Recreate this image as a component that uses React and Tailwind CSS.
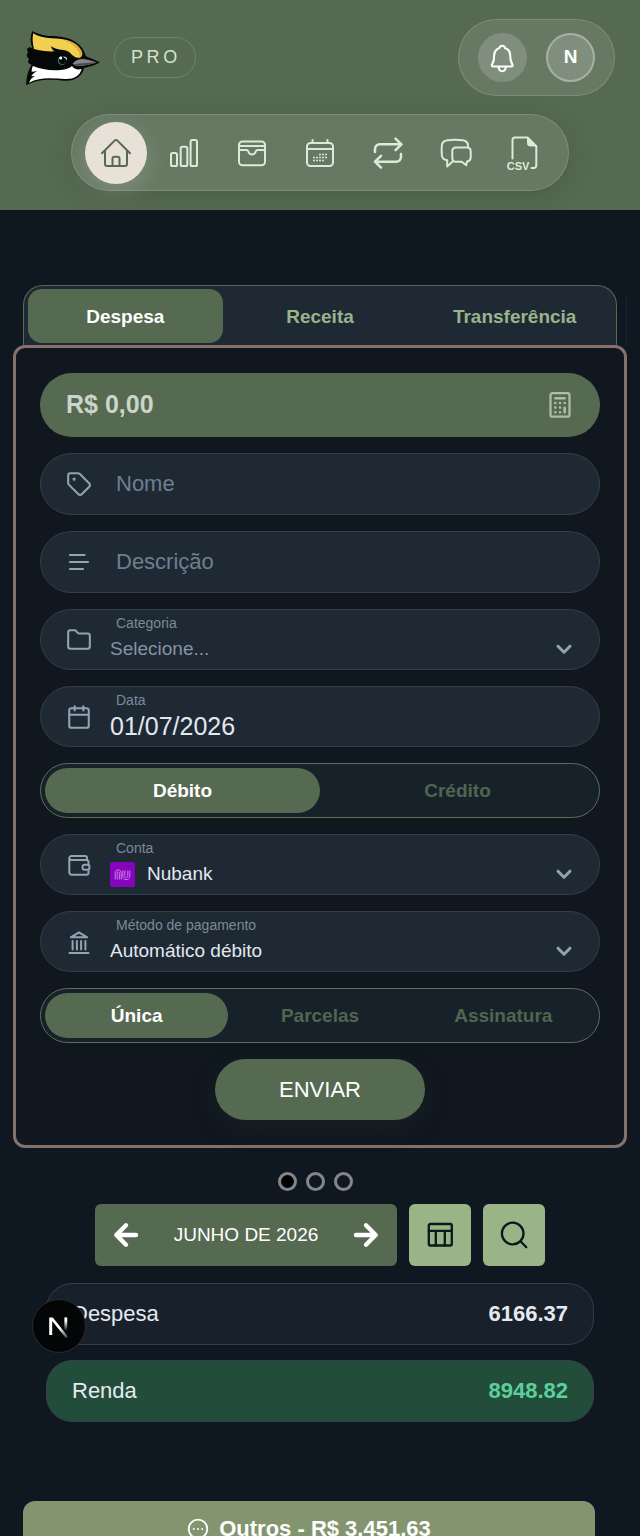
import { useState } from "react";
import { Calendar, Folder, Tag } from "lucide-react";

function BirdLogo() {
  return (
    <svg viewBox="75 88 228 168" className="h-14 w-[76px]" role="img" aria-label="Logo">
      <path
        fill="#060807"
        d="M97 91C110 98 130 106 155 106c42 0 82 14 96 44l7 17 42 18c-10 7-30 13-48 17-6 26-27 40-62 38-32-3-72-7-111 14-1-28 8-49 16-62-11-3-14-10-7-17-9-5-10-14-3-20-6-6-5-14 5-15l7 2c-7-17-7-35 0-51z"
      />
      <path
        fill="#f3cf4f"
        d="M100 98c12 9 34 14 55 15 40 0 76 10 90 38 4 9 2 17-5 20-12 3-22-6-30-15-8-7-18-9-27-9-12-1-21-4-30-10 2 8 6 12 11 15-18 1-44-1-62-7-4-18-6-32-2-47z"
      />
      <path
        fill="#dba93a"
        d="M190 118c28 4 46 14 54 33 3 9 2 16-4 20 0-26-20-42-50-53z"
      />
      <path
        fill="#ffffff"
        d="M99 196c22 9 52 15 82 12 18-1 28-6 35-12 5 9 17 12 29 9-6 21-23 31-49 30-36-1-72-9-109 11 4-10 10-16 18-20l-11 1c4-8 11-13 19-15l-18 1c0-7 1-12 4-17z"
      />
      <path
        fill="#84838a"
        stroke="#060807"
        strokeWidth="3"
        d="M217 189c7-12 22-17 38-15 15 3 29 7 39 11-14 6-38 12-54 13-11 0-19-3-23-9z"
      />
      <path fill="#4c4b52" d="M222 191c22-3 46-5 68-6-16 6-36 10-50 11-8 0-14-2-18-5z" />
      <circle cx="186" cy="180" r="13" fill="#1d7068" />
      <circle cx="188" cy="179" r="11" fill="#050606" />
      <circle cx="182" cy="172" r="4.5" fill="#fff" />
      <path d="M191 169c5 0 8 3 9 8" fill="none" stroke="#dfe5e2" strokeWidth="3.5" />
    </svg>
  );
}

const line = {
  fill: "none",
  stroke: "currentColor",
  strokeLinecap: "round",
  strokeLinejoin: "round",
  "aria-hidden": true,
};

const HomeIcon = () => (
  <svg {...line} viewBox="0 0 32 32" strokeWidth="2" className="size-8">
    <path d="M2 16.2 14.6 3.6q1.4-1.2 2.8 0L30 16.2M5 13.5V27a2 2 0 0 0 2 2h18a2 2 0 0 0 2-2V13.5M12.5 29v-7.3a2 2 0 0 1 2-2h3a2 2 0 0 1 2 2V29" />
  </svg>
);
const BarsIcon = () => (
  <svg {...line} viewBox="0 0 32 32" strokeWidth="2" className="size-8">
    <rect x="3" y="16" width="6" height="13" rx="1.6" />
    <rect x="12.7" y="9.8" width="6.6" height="19.2" rx="1.6" />
    <rect x="22.6" y="3" width="6.4" height="26" rx="1.6" />
  </svg>
);
const ArchiveIcon = () => (
  <svg {...line} viewBox="0 0 32 32" strokeWidth="2" className="size-8">
    <rect x="3" y="4.5" width="26" height="23.7" rx="3.5" />
    <path d="M3.5 9h25M3 13h7.3c1.2 0 1.7.6 2.1 1.8.6 1.7 1.8 2.7 3.6 2.7s3-1 3.6-2.7c.4-1.2.9-1.8 2.1-1.8H29" />
  </svg>
);
const AgendaIcon = () => (
  <svg {...line} viewBox="0 0 32 32" strokeWidth="2" className="size-8">
    <rect x="3" y="6" width="26" height="23" rx="3.5" />
    <path d="M3 12h26M8.5 3v3M23.5 3v3" />
    <path
      strokeWidth="2"
      d="M16 17.4h0M19 17.4h0M22 17.4h0M10 20.5h0M13 20.5h0M16 20.5h0M19 20.5h0M22 20.5h0M10 23.6h0M13 23.6h0M16 23.6h0M19 23.6h0"
    />
  </svg>
);
const RepeatIcon = () => (
  <svg {...line} viewBox="0 0 32 32" strokeWidth="2.5" className="size-8">
    <path d="M3 15v-3a4.7 4.7 0 0 1 4.700-4.700H29M23.500 1.600l6 5.700-6 5.800M29 17v3a4.700 4.700 0 0 1-4.700 4.700H3M9 18.800l-6 5.900 6 5.900" />
  </svg>
);
const ChatIcon = () => (
  <svg {...line} viewBox="0 0 32 32" strokeWidth="2" className="size-8">
    <path d="M28 10V8.500c0-3.300-2-4.700-5.500-5.200-4.500-.6-10.500-.6-15 0C4 3.800 2 5.200 1.800 8.500c-.2 3.500-.2 6.500 0 9.500.2 3 1.900 4.800 5.400 5.200v6.300l6-5.600" />
    <path d="M16 10.500h11c2.500 0 3.700 1.200 3.700 3.700v6.100c0 2.500-1.300 4-3.800 4.300l-.6 3.700-4.600-3.600H16c-2.500 0-3.700-1.300-3.700-3.800v-6.700c0-2.500 1.200-3.700 3.700-3.700z" />
  </svg>
);
const CsvIcon = () => (
  <svg {...line} viewBox="2 0 32 32" strokeWidth="2" className="size-8 overflow-visible">
    <path d="M6.500 21.500V3a2.500 2.500 0 0 1 2.500-2.500h12.500L30.300 9.300v19.200a2.500 2.500 0 0 1-2.500 2.500H25.500" />
    <path fill="currentColor" strokeWidth="1" d="M21.500.8v5.700a2.500 2.500 0 0 0 2.500 2.500h6z" />
    <text
      x="12"
      y="32.700"
      textAnchor="middle"
      fill="currentColor"
      stroke="none"
      className="font-['Liberation_Sans',sans-serif] text-[11px] font-bold"
    >
      CSV
    </text>
  </svg>
);
const BellIcon = () => (
  <svg {...line} viewBox="1 0 32 32" strokeWidth="2.100" className="size-8">
    <path d="M16.200 3.800c-1.500 0-2.400.8-2.800 2.100C9.800 7.300 8.200 10 8.200 13.500c0 3.500-.6 6.300-2 8.600-.9 1.400-.2 2.400 1.100 2.400h17.800c1.300 0 2-1 1.100-2.400-1.400-2.300-2-5.100-2-8.600 0-3.500-1.600-6.200-5.200-7.600-.4-1.300-1.300-2.100-2.800-2.100zM12.600 25c.2 2.600 1.600 4.200 3.600 4.200s3.400-1.600 3.600-4.200" />
  </svg>
);
const LinesIcon = () => (
  <svg {...line} viewBox="0 0 26 26" strokeWidth="2.200" className="size-[26px]">
    <path d="M4 6h14.500M4 13h18M4 20h13" />
  </svg>
);
const WalletIcon = () => (
  <svg {...line} viewBox="0 0 26 26" strokeWidth="2" className="size-[26px]">
    <path d="M21 8V6a2 2 0 0 0-2-2H5.300a2 2 0 0 0-2 2 2 2 0 0 0 2 2H20.500a2 2 0 0 1 2 2v2.500M3.300 6v14.500a2.200 2.200 0 0 0 2.200 2.200H20.500a2 2 0 0 0 2-2V18" />
    <rect x="16.500" y="12.700" width="7" height="5" rx="2.300" />
  </svg>
);
const BankIcon = () => (
  <svg {...line} viewBox="0 0 26 26" strokeWidth="2" className="size-[26px]">
    <path d="M13 3.300 4.800 8.300h16.400zM6.600 12v8.500M10.900 12v8.500M15.100 12v8.500M19.400 12v8.500M3.500 24h19" />
  </svg>
);
const CalculatorIcon = () => (
  <svg {...line} viewBox="0 0 28 28" strokeWidth="2.200" className="size-7">
    <rect x="4.500" y="2.200" width="19" height="23.500" rx="2" />
    <path d="M9.500 7.300h9" strokeWidth="2.600" />
    <path
      strokeWidth="2.600"
      d="M9.300 12h0M14 12h0M18.700 12h0M9.300 16.600h0M14 16.600h0M9.300 21.300h0M14 21.300h0M18.700 16.800v4.400"
    />
  </svg>
);
const ChevronIcon = () => (
  <svg {...line} viewBox="0 0 20 20" strokeWidth="3" className="pointer-events-none size-5 text-[#94a3b3]">
    <path d="m4 7.200 6 6 6-6" />
  </svg>
);
const ArrowIcon = ({ d }) => (
  <svg {...line} viewBox="0 0 28 28" strokeWidth="4.400" className="size-7">
    <path d={d} />
  </svg>
);
const TableIcon = () => (
  <svg {...line} viewBox="0 0 28 28" strokeWidth="2.300" className="size-7">
    <rect x="2.800" y="3" width="23" height="21.500" rx="1.500" />
    <path d="M2.800 9.800h23M9.800 9.800v14.700M18.800 9.800v14.700" />
  </svg>
);
const SearchIcon = () => (
  <svg {...line} viewBox="0 0 28 28" strokeWidth="2.300" className="size-7">
    <circle cx="12.700" cy="12.500" r="10.800" />
    <path d="m20.500 20.300 5.800 5.900" />
  </svg>
);
const MoreIcon = () => (
  <svg {...line} viewBox="0 0 22 22" strokeWidth="1.800" className="size-[22px]">
    <circle cx="11" cy="11" r="9.300" />
    <path strokeWidth="1.900" d="M6.800 11h0M11 11h0M15.200 11h0" />
  </svg>
);
const NubankLogo = () => (
  <svg viewBox="0 0 25 25" className="size-[25px] shrink-0 rounded-[2px] bg-[#8505bd]" aria-hidden="true">
    <g fill="none" stroke="#d58af0" strokeWidth="0.900">
      <path d="M5.200 17.500v-6c0-2.400 1.200-3.600 3-3.600 2 0 3 1.200 3 3.600v6" />
      <path d="M7.200 17.500v-5.700c0-1.300.4-2 1.100-2s1.100.7 1.100 2v5.700" />
      <path d="M12.800 8.500v5.600c0 2.300 1 3.500 3.200 3.500s3.800-1.200 3.800-3.500V8.500" />
      <path d="M14.800 8.500v5.200c0 1.300.4 2 1.300 2s1.700-.7 1.700-2V8.500" />
    </g>
  </svg>
);

const navItems = [
  { label: "Início", Icon: HomeIcon },
  { label: "Gráficos", Icon: BarsIcon },
  { label: "Arquivo", Icon: ArchiveIcon },
  { label: "Agenda", Icon: AgendaIcon },
  { label: "Recorrências", Icon: RepeatIcon },
  { label: "Mensagens", Icon: ChatIcon },
  { label: "Exportar CSV", Icon: CsvIcon },
];

function Header() {
  return (
    <header className="flex flex-col gap-[18px] overflow-hidden bg-[#566a52] py-[19px]">
      <div className="flex items-center px-[25px]">
        <BirdLogo />
        <span className="ml-[13px] flex h-[41px] items-center rounded-full border border-white/15 pr-3.5 pl-4 text-[18px] tracking-[0.2em] text-[#d3e3d0]">
          PRO
        </span>
        <div className="ml-auto flex h-[77px] items-center gap-[19px] rounded-full border border-white/15 bg-white/10 px-[19px]">
          <button
            type="button"
            aria-label="Notificações"
            className="flex size-[49px] items-center justify-center rounded-full bg-white/17 text-white"
          >
            <BellIcon />
          </button>
          <button
            type="button"
            aria-label="Perfil"
            className="flex size-[49px] items-center justify-center rounded-full border-2 border-white/30 bg-white/17 text-[19px] font-bold text-white"
          >
            N
          </button>
        </div>
      </div>
      <nav
        aria-label="Principal"
        className="mx-auto flex h-[77px] items-center gap-1.5 rounded-full border border-white/15 bg-white/10 px-[13px] shadow-[0_6px_28px_rgba(0,0,0,0.12)]"
      >
        {navItems.map(({ label, Icon }, i) => (
          <button
            key={label}
            type="button"
            aria-label={label}
            className={
              i === 0
                ? "flex size-[62px] items-center justify-center rounded-full bg-[#e8e1d7] text-[#566a52] shadow-[0_8px_24px_rgba(232,225,215,0.2)]"
                : "flex size-[62px] items-center justify-center rounded-full text-[#dcebd8]"
            }
          >
            <Icon />
          </button>
        ))}
      </nav>
    </header>
  );
}

function Tabs() {
  const [active, setActive] = useState("Despesa");
  return (
    <div className="relative mx-[23px] grid grid-cols-3 rounded-t-[20px] border border-b-0 border-[#566a52] bg-[#1e2934] px-1 pt-[3px] pb-0.5">
      {["Despesa", "Receita", "Transferência"].map((name) => (
        <button
          key={name}
          type="button"
          onClick={() => setActive(name)}
          className={
            active === name
              ? "h-[54px] rounded-[14px] bg-[#566a52] pt-0.5 text-[19px] font-bold text-white"
              : "h-[54px] rounded-[14px] pt-0.5 text-[19px] font-bold text-[#9ab38b]"
          }
        >
          {name}
        </button>
      ))}
      <span className="absolute top-2.5 -right-[11px] bottom-0 w-px bg-[#1a2431]" />
    </div>
  );
}

function Segmented({ label, options }) {
  const [active, setActive] = useState(options[0]);
  return (
    <div
      role="group"
      aria-label={label}
      className="flex h-[55px] rounded-full border border-[#5a7057] bg-[#17212a] p-1"
    >
      {options.map((name) => (
        <button
          key={name}
          type="button"
          aria-pressed={active === name}
          onClick={() => setActive(name)}
          className={
            active === name
              ? "flex-1 basis-0 rounded-full bg-[#566a52] pt-px text-[19px] font-bold text-white"
              : "flex-1 basis-0 rounded-full pt-px text-[19px] font-bold text-[#51664e]"
          }
        >
          {name}
        </button>
      ))}
    </div>
  );
}

function TextField({ id, label, icon }) {
  return (
    <div className="flex h-[62px] items-center gap-[18px] rounded-full border border-[#313e4c] bg-[#1e2934] px-[25px] text-[#94a3b3]">
      {icon}
      <input
        id={id}
        type="text"
        aria-label={label}
        placeholder={label}
        className="min-w-0 flex-1 bg-transparent pb-0.5 pl-1.5 text-[22px] text-[#e2e8f0] outline-none placeholder:text-[#6f7f90]"
      />
    </div>
  );
}

function LabelledField({ id, label, icon, children }) {
  return (
    <div className="flex h-[61px] items-center gap-[18px] rounded-full border border-[#313e4c] bg-[#1e2934] px-[25px] text-[#94a3b3]">
      {icon}
      <div className="flex min-w-0 flex-1 flex-col gap-1 self-start pt-1">
        <label htmlFor={id} className="pl-1.5 text-[14px] leading-[18px] text-[#7b8a9a]">
          {label}
        </label>
        <div className="flex h-[26px] items-center">{children}</div>
      </div>
    </div>
  );
}

function Select({ id, value, muted }) {
  return (
    <>
      <select
        id={id}
        className={
          muted
            ? "h-[26px] min-w-0 flex-1 appearance-none bg-transparent text-[19px] leading-[26px] text-[#8593a3] outline-none"
            : "h-[26px] min-w-0 flex-1 appearance-none bg-transparent text-[19px] leading-[26px] text-[#e2e8f0] outline-none"
        }
      >
        <option>{value}</option>
      </select>
      <ChevronIcon />
    </>
  );
}

function ExpenseForm() {
  return (
    <form
      onSubmit={(e) => e.preventDefault()}
      className="relative mx-[13px] flex flex-col gap-4 rounded-[12px] border-3 border-[#85706a] bg-[#10171f] px-6 py-[25px]"
    >
      <div className="flex h-16 items-center rounded-full bg-[#566a52] px-[26px]">
        <input
          type="text"
          aria-label="Valor"
          placeholder="R$ 0,00"
          className="min-w-0 flex-1 bg-transparent text-[25px] font-bold text-white outline-none placeholder:text-[#ccd5c9]"
        />
        <button type="button" aria-label="Calculadora" className="text-[#b0bdac]">
          <CalculatorIcon />
        </button>
      </div>
      <TextField id="nome" label="Nome" icon={<Tag size={26} strokeWidth={1.9} />} />
      <TextField id="descricao" label="Descrição" icon={<LinesIcon />} />
      <LabelledField id="categoria" label="Categoria" icon={<Folder size={26} strokeWidth={1.9} />}>
        <Select id="categoria" value="Selecione..." muted />
      </LabelledField>
      <LabelledField id="data" label="Data" icon={<Calendar size={26} strokeWidth={1.9} />}>
        <input
          id="data"
          type="text"
          defaultValue="01/07/2026"
          className="min-w-0 flex-1 bg-transparent text-[25px] leading-7 text-[#e2e8f0] outline-none"
        />
      </LabelledField>
      <Segmented label="Tipo" options={["Débito", "Crédito"]} />
      <LabelledField id="conta" label="Conta" icon={<WalletIcon />}>
        <div className="flex min-w-0 flex-1 items-center">
          <NubankLogo />
          <span className="w-3" />
          <Select id="conta" value="Nubank" />
        </div>
      </LabelledField>
      <LabelledField id="metodo" label="Método de pagamento" icon={<BankIcon />}>
        <Select id="metodo" value="Automático débito" />
      </LabelledField>
      <Segmented label="Frequência" options={["Única", "Parcelas", "Assinatura"]} />
      <button
        type="submit"
        className="h-[61px] w-[210px] self-center rounded-full bg-[#566a52] text-[22px] text-white shadow-[0_8px_30px_rgba(86,106,82,0.1)]"
      >
        ENVIAR
      </button>
    </form>
  );
}

function SummaryRow({ name, value, className, valueClassName }) {
  return (
    <div
      className={`flex h-[62px] items-center justify-between rounded-[26px] border border-[#323e4e] px-[25px] pb-0.5 text-[22px] text-[#e5eaf0] ${className}`}
    >
      <span>{name}</span>
      <span className={`font-bold ${valueClassName}`}>{value}</span>
    </div>
  );
}

export default function App() {
  return (
    <div className="h-screen overflow-x-hidden overflow-y-auto bg-[#0f1820] font-['Liberation_Sans',Arial,sans-serif] [scrollbar-width:none]">
      <Header />
      <main className="pt-[75px]">
        <Tabs />
        <ExpenseForm />

        <div className="mt-6 flex justify-center gap-[9px] pr-2.5">
          <button type="button" aria-label="Página 1" className="size-[19px] rounded-full border-3 border-[#83868c] bg-black" />
          <button type="button" aria-label="Página 2" className="size-[19px] rounded-full border-3 border-[#83868c]" />
          <button type="button" aria-label="Página 3" className="size-[19px] rounded-full border-3 border-[#83868c]" />
        </div>

        <div className="mt-[13px] flex justify-center gap-3">
          <div className="flex h-[62px] w-[302px] items-center justify-between rounded-md bg-[#566a52] px-[17px] text-white">
            <button type="button" aria-label="Mês anterior">
              <ArrowIcon d="M24 14H4.500M14 4.300 4.300 14l9.700 9.700" />
            </button>
            <span className="text-[19px]">JUNHO DE 2026</span>
            <button type="button" aria-label="Próximo mês">
              <ArrowIcon d="M4 14h19.500M14 4.300l9.700 9.700-9.700 9.700" />
            </button>
          </div>
          <button type="button" aria-label="Tabela" className="flex size-[62px] items-center justify-center rounded-md bg-[#9ab487] text-[#0a1a1c]">
            <TableIcon />
          </button>
          <button type="button" aria-label="Buscar" className="flex size-[62px] items-center justify-center rounded-md bg-[#9ab487] text-[#0a1a1c]">
            <SearchIcon />
          </button>
        </div>

        <section aria-label="Resumo" className="mx-[46px] mt-[17px] flex flex-col gap-[15px]">
          <SummaryRow name="Despesa" value="6166.37" className="bg-[#18212b]" valueClassName="text-[#e5eaf0]" />
          <SummaryRow name="Renda" value="8948.82" className="bg-[#234d3b]" valueClassName="text-[#5bd09c]" />
        </section>

        <section className="mt-[79px] mr-[45px] ml-[23px] flex h-40 items-start justify-center gap-2.5 rounded-[12px] bg-[#83956f] pt-3.5 text-[22px] leading-7 font-bold text-white">
          <span className="flex h-7 items-center">
            <MoreIcon />
          </span>
          <h2>Outros - R$ 3.451,63</h2>
        </section>
      </main>

      <button
        type="button"
        aria-label="Ferramentas de desenvolvimento"
        className="fixed bottom-[183px] left-8 flex size-[54px] items-center justify-center rounded-full border border-[#2b2b2b] bg-[#040506]"
      >
        <svg viewBox="0 0 54 54" className="size-[54px] shrink-0" aria-hidden="true">
          <defs>
            <linearGradient id="n-diagonal" x1="28" y1="29" x2="35" y2="39" gradientUnits="userSpaceOnUse">
              <stop stopColor="#fff" />
              <stop offset="1" stopColor="#fff" stopOpacity="0.200" />
            </linearGradient>
            <linearGradient id="n-stem" x1="33" y1="22" x2="33" y2="32" gradientUnits="userSpaceOnUse">
              <stop stopColor="#fff" />
              <stop offset="1" stopColor="#fff" stopOpacity="0" />
            </linearGradient>
          </defs>
          <path d="M17.200 18.400h3.600L36 37.600 34 39.300 20.200 22V36h-3z" fill="url(#n-diagonal)" />
          <path d="M32.400 18.400h2.800V32h-2.800z" fill="url(#n-stem)" />
        </svg>
      </button>
    </div>
  );
}
